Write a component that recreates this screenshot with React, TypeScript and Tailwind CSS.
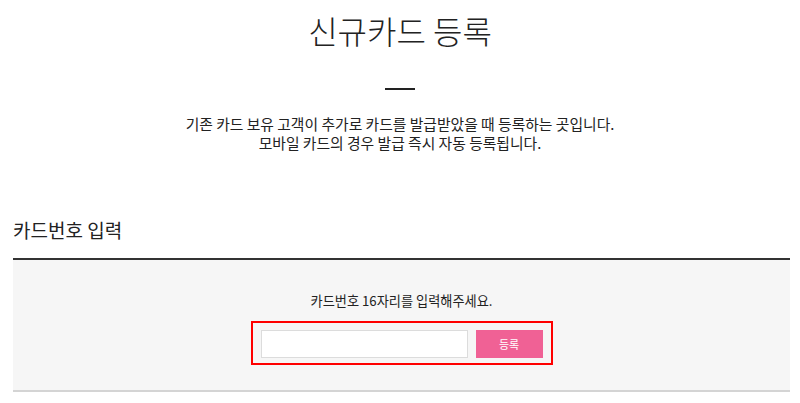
export default function App() {
	return (
		<div
			className="w-[800px] h-[403px] bg-white text-[#333] overflow-hidden"
			style={{ fontFamily: '"Noto Sans CJK KR", "Noto Sans", sans-serif' }}
		>
			<h1 className="pt-[6px] text-center text-[32px] leading-[48px] font-light text-[#222]">
				신규카드 등록
			</h1>
			<div className="mx-auto mt-[34px] w-[30px] h-[2px] bg-[#222]" />
			<div className="mt-[24px] text-center text-[14.8px] leading-[19px] text-[#222]">
				<p>기존 카드 보유 고객이 추가로 카드를 발급받았을 때 등록하는 곳입니다.</p>
				<p>모바일 카드의 경우 발급 즉시 자동 등록됩니다.</p>
			</div>
			<div className="mx-[13px] mt-[65px] w-[777px]">
				<h2 className="text-[19px] leading-[26px] text-[#222]">카드번호 입력</h2>
				<div className="mt-[15px] border-t-2 border-b-2 border-t-[#333] border-b-[#d4d4d4] bg-[#f6f6f6] h-[134px]">
					<p className="pt-[31px] text-center text-[13.2px] leading-[20px] text-[#222]">
						카드번호 16자리를 입력해주세요.
					</p>
					<div className="mx-auto mt-[10px] flex w-[302px] items-center gap-[8px] border-2 border-[#ff0000] pl-[8px] pr-[8px] pt-[7px] pb-[5px]">
						<input
							type="text"
							className="h-[28px] w-[207px] border border-[#dcdcdc] bg-white outline-none"
						/>
						<button className="h-[28px] w-[67px] bg-[#f06195] text-[11px] text-white">
							등록
						</button>
					</div>
				</div>
			</div>
		</div>
	);
}
